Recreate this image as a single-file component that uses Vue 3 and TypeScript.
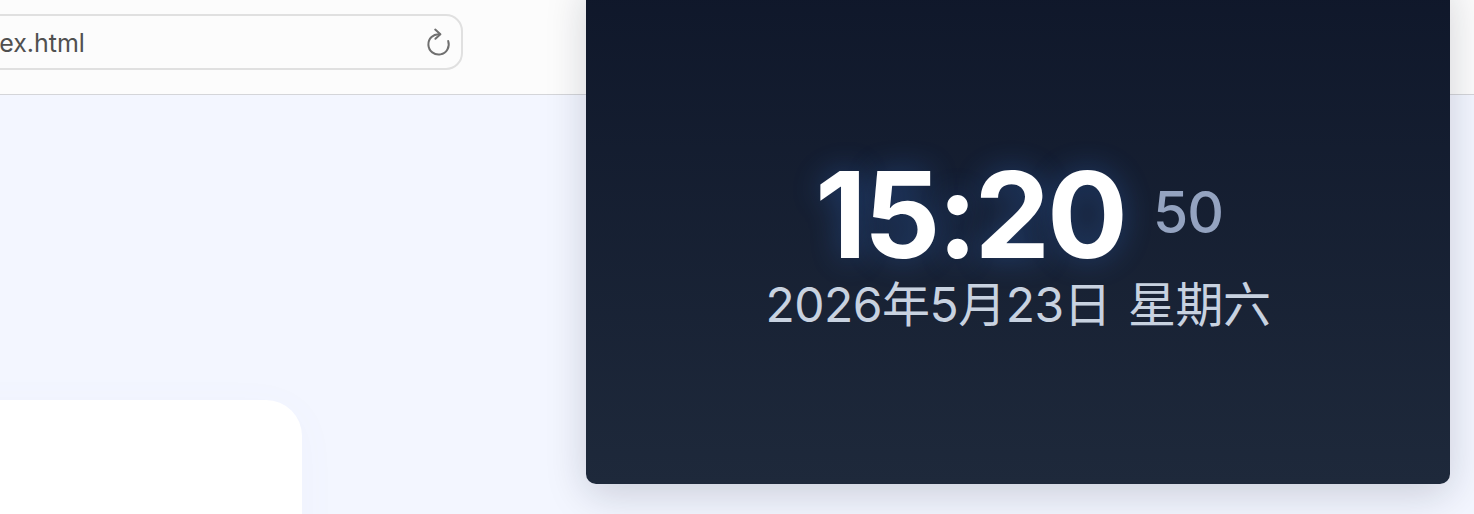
<script setup lang="ts">
const time = '15:20'
const seconds = '50'
const date = '2026年5月23日 星期六'
</script>

<template>
  <div class="page">
    <header class="toolbar">
      <div class="address">
        <span class="url">index.html</span>
        <svg class="reload" width="26" height="30" viewBox="0 0 26 30" fill="none" stroke="#6f6f6f" stroke-width="2" stroke-linecap="round" stroke-linejoin="round">
          <path d="M14.5 6.2 A10.2 10.2 0 1 0 23.2 13" />
          <path d="M10.2 1.6 L15.4 6.3 L10.4 10.8" />
        </svg>
      </div>
    </header>
    <main class="content">
      <section class="card"></section>
    </main>
    <aside class="clock">
      <div class="row">
        <span class="time">{{ time }}</span>
        <span class="seconds">{{ seconds }}</span>
      </div>
      <div class="date">{{ date }}</div>
    </aside>
  </div>
</template>

<style>
html, body { margin: 0; padding: 0; background: #f3f6ff; overflow: hidden; }
</style>

<style scoped>
.page {
  position: relative;
  width: 1474px;
  height: 514px;
  overflow: hidden;
  background: #f3f6ff;
  font-family: Inter, "Noto Sans CJK SC", sans-serif;
}
.toolbar {
  box-sizing: border-box;
  height: 95px;
  padding-top: 14px;
  background: #fcfcfc;
  border-bottom: 1px solid #d4d5d9;
}
.address {
  box-sizing: border-box;
  display: flex;
  align-items: center;
  justify-content: space-between;
  width: 563px;
  height: 56px;
  margin-left: -100px;
  padding: 2px 10px 0 61px;
  background: #fcfcfc;
  border: 2px solid #e0e0e0;
  border-radius: 17px;
}
.url {
  font-size: 25px;
  color: #505050;
}
.reload { display: block; }
.content { padding-top: 305px; }
.card {
  width: 402px;
  height: 200px;
  margin-left: -100px;
  background: #fff;
  border-radius: 36px;
  box-shadow: 0 8px 40px rgba(120, 140, 200, 0.04);
}
.clock {
  position: absolute;
  left: 586px;
  top: -20px;
  width: 864px;
  height: 504px;
  padding-top: 25px;
  box-sizing: border-box;
  display: flex;
  flex-direction: column;
  align-items: center;
  justify-content: center;
  background: linear-gradient(180deg, #0f172a, #1e293b);
  border-radius: 10px;
  box-shadow: 0 10px 40px rgba(15, 23, 42, 0.18);
}
.row {
  display: flex;
  align-items: center;
  gap: 28px;
  height: 110px;
  padding-left: 2px;
}
.time {
  font-size: 120px;
  line-height: 110px;
  font-weight: 650;
  letter-spacing: -3px;
  color: #fff;
  text-shadow: 0 0 30px rgba(59, 130, 246, 0.32);
}
.seconds {
  margin-bottom: 4px;
  font-size: 57px;
  line-height: 60px;
  font-weight: 500;
  letter-spacing: -1px;
  color: #94a3c0;
}
.date {
  margin-top: 10px;
  font-size: 48px;
  line-height: 50px;
  font-weight: 400;
  letter-spacing: -0.5px;
  word-spacing: 4px;
  color: #c8d2e0;
  white-space: pre;
}
</style>
